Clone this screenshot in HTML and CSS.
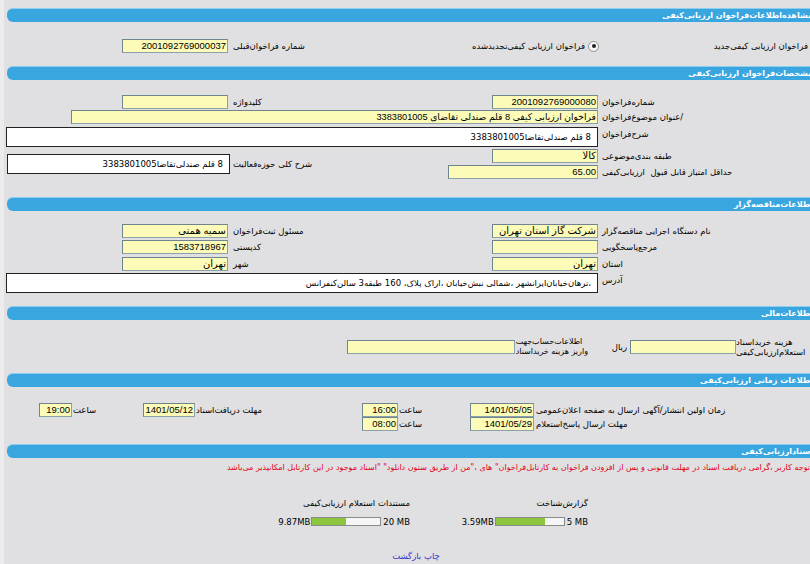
FILE: index.html
```html
<!DOCTYPE html>
<html lang="fa">
<head>
<meta charset="utf-8">
<title>مشاهده اطلاعات فراخوان ارزیابی کیفی</title>
<link rel="stylesheet" href="styles.css">
</head>
<body>
<div class="page">

  <div class="bar"><span>مشاهده‌اطلاعات‌فراخوان ارزیابی‌کیفی</span></div>
  <div class="body s1">
    <div class="form rows1">
      <div class="c1 r"><span class="radio"></span><span class="rlab">فراخوان ارزیابی کیفی‌جدید</span></div>
      <div class="c2 r"><span class="radio on"></span><span class="rlab">فراخوان ارزیابی کیفی‌تجدیدشده</span></div>
      <div class="c3 lab">شماره فراخوان‌قبلی</div>
      <div class="c4"><span class="fld w105">2001092769000037</span></div>
    </div>
  </div>

  <div class="bar"><span>مشخصات‌فراخوان ارزیابی‌کیفی</span></div>
  <div class="body s2">
    <div class="form rows2">
      <div class="c1 lab">شماره‌فراخوان</div>
      <div class="c2"><span class="fld w105">2001092769000080</span></div>
      <div class="c3 lab">کلیدواژه</div>
      <div class="c4"><span class="fld w105"></span></div>

      <div class="c1 lab">/عنوان موضوع‌فراخوان</div>
      <div class="c2 span3"><span class="fld wtitle ar">فراخوان ارزیابی کیفی 8 قلم صندلی تقاضای 3383801005</span></div>

      <div class="c1 lab">شرح‌فراخوان</div>
      <div class="c2 span3"><span class="box wide">8 قلم صندلی‌تقاضا3383801005</span></div>

      <div class="c1 lab">طبقه بندی‌موضوعی</div>
      <div class="c2"><span class="fld w105 ar">کالا</span></div>
      <div class="c3 lab tall">شرح کلی حوزه‌فعالیت</div>
      <div class="c4 tall"><span class="box small">8 قلم صندلی‌تقاضا3383801005</span></div>

      <div class="c1 lab">حداقل امتیاز قابل قبول  ارزیابی‌کیفی</div>
      <div class="c2"><span class="fld w149">65.00</span></div>
    </div>
  </div>

  <div class="bar"><span>اطلاعات‌مناقصه‌گزار</span></div>
  <div class="body s3">
    <div class="form rows3">
      <div class="c1 lab">نام دستگاه اجرایی مناقصه‌گزار</div>
      <div class="c2"><span class="fld w105 ar">شرکت گاز استان تهران</span></div>
      <div class="c3 lab">مسئول ثبت‌فراخوان</div>
      <div class="c4"><span class="fld w105 ar">سمیه همتی</span></div>

      <div class="c1 lab">مرجع‌پاسخگویی</div>
      <div class="c2"><span class="fld w105"></span></div>
      <div class="c3 lab">کدپستی</div>
      <div class="c4"><span class="fld w105">1583718967</span></div>

      <div class="c1 lab">استان</div>
      <div class="c2"><span class="fld w105 ar">تهران</span></div>
      <div class="c3 lab">شهر</div>
      <div class="c4"><span class="fld w105 ar">تهران</span></div>

      <div class="c1 lab">آدرس</div>
      <div class="c2 span3"><span class="box wide">،ترهان‌خیابان‌ایرانشهر ،شمالی نبش‌خیابان ،اراک پلاک، 160 طبقه3 سالن‌کنفرانس</span></div>
    </div>
  </div>

  <div class="bar"><span>اطلاعات‌مالی</span></div>
  <div class="body s4">
    <div class="money">
      <div class="mlab1">هزینه خرید‌اسناد<br>استعلام‌ارزیابی‌کیفی</div>
      <span class="fld w105"></span>
      <span class="rial">ریال</span>
      <div class="mlab2">اطلاعات‌حساب‌جهت<br>واریز هزینه خرید‌اسناد</div>
      <span class="fld w168"></span>
    </div>
  </div>

  <div class="bar"><span>اطلاعات زمانی ارزیابی‌کیفی</span></div>
  <div class="body s5">
    <div class="times">
      <div class="t1 lab">زمان اولین انتشار/آگهی ارسال به صفحه اعلان‌عمومی</div>
      <div class="t2"><span class="fld wdate">1401/05/05</span></div>
      <div class="t3 lab">ساعت</div>
      <div class="t4"><span class="fld wtime">16:00</span></div>
      <div class="t5 lab">مهلت دریافت‌اسناد</div>
      <div class="t6"><span class="fld wdate2">1401/05/12</span></div>
      <div class="t7 lab">ساعت</div>
      <div class="t8"><span class="fld wtime2">19:00</span></div>
      <div class="t9"></div>

      <div class="t1 lab">مهلت ارسال پاسخ‌استعلام</div>
      <div class="t2"><span class="fld wdate">1401/05/29</span></div>
      <div class="t3 lab">ساعت</div>
      <div class="t4"><span class="fld wtime">08:00</span></div>
    </div>
  </div>

  <div class="bar"><span>اسناد‌ارزیابی‌کیفی</span></div>
  <div class="body s6">
    <div class="notice">توجه کاربر ،گرامی دریافت اسناد در مهلت قانونی و پس از افزودن فراخوان به کارتابل‌فراخوان" های ،"من از طریق ستون دانلود" "اسناد موجود در این کارتابل امکانپذیر می‌باشد</div>
    <div class="docs">
      <div class="doc">
        <div class="dtitle">گزارش‌شناخت</div>
        <div class="drow"><bdi class="cap" dir="ltr">5 MB</bdi><span class="meter"><span class="fill" style="width:72%"></span></span><bdi class="used" dir="ltr">3.59MB</bdi></div>
      </div>
      <div class="doc">
        <div class="dtitle">مستندات استعلام ارزیابی‌کیفی</div>
        <div class="drow"><bdi class="cap" dir="ltr">20 MB</bdi><span class="meter"><span class="fill" style="width:49%"></span></span><bdi class="used" dir="ltr">9.87MB</bdi></div>
      </div>
    </div>
    <div class="links"><a href="#">چاپ</a> <a href="#">بازگشت</a></div>
  </div>

</div>
</body>
</html>
```

FILE: styles.css
```css
html, body {
  margin: 0;
  padding: 0;
  overflow: hidden;
}
body {
  background: #ececec;
  font-family: "DejaVu Sans", "Liberation Sans", sans-serif;
  font-size: 8.5px;
  color: #000;
  width: 810px;
  height: 564px;
}
.page {
  margin-left: 4px;
  width: 818px;
  padding: 8px 0 0 3px;
  height: 556px;
  background: #e0e0e2;
  direction: rtl;
}
.bar {
  height: 13px;
  background: #3aa6df;
  border-top: 1px solid #8ccdf0;
  border-radius: 6px 0 0 6px;
  color: #fff;
  font-weight: bold;
  font-size: 8px;
  line-height: 13px;
  padding-right: 12px;
  white-space: nowrap;
  overflow: hidden;
}
.form {
  display: grid;
  grid-template-columns: 225px 280px 89px 224px;
  align-items: start;
}
.rows1 { grid-template-rows: 14px; }
.rows2 { grid-template-rows: 15px 17px 22px 16px 14px; }
.rows3 { grid-template-rows: 16px 17px 16px 20px; }
.s1 { padding: 17px 0 13px; }
.s2 { padding: 15px 0 18px; }
.s3 { padding: 13px 0 13px; }
.s4 { padding: 16px 0 15px; }
.s5 { padding: 16px 0 13px; }
.s6 { padding: 0; }

.c1 { grid-column: 1; }
.c2 { grid-column: 2; }
.c3 { grid-column: 3; }
.c4 { grid-column: 4; }
.span3 { grid-column: 2 / 5; }
.lab {
  text-align: left;
  padding-left: 2px;
  line-height: 14px;
  white-space: pre;
}
.tall { grid-row: 4 / 6; align-self: center; }
.c4.tall { display: flex; }

.r { display: flex; align-items: center; height: 14px; white-space: nowrap; }
.c1.r { padding-right: 3px; }
.c2.r { padding-right: 1px; }
.radio {
  width: 11px;
  height: 11px;
  border: 1px solid #8e8f8f;
  border-radius: 50%;
  background: #f7f7f7;
  box-sizing: border-box;
  margin-left: 3px;
  position: relative;
  flex: none;
}
.radio.on::after {
  content: "";
  position: absolute;
  left: 2.5px;
  top: 2.5px;
  width: 4px;
  height: 4px;
  border-radius: 50%;
  background: #222;
}

.fld {
  display: block;
  box-sizing: border-box;
  height: 14px;
  background: #fdfbb8;
  border: 1px solid #8aa0aa;
  border-top-color: #6e8590;
  border-left-color: #6e8590;
  font-family: "Liberation Sans", "DejaVu Sans", sans-serif;
  font-size: 9.5px;
  line-height: 12px;
  padding: 0 1px 0 2px;
  text-align: right;
  white-space: nowrap;
  overflow: hidden;
  flex: none;
}
.fld.ar { font-size: 10px; }
.fld.wtitle { font-size: 9.2px; }
.c2 .fld, .c2 .box { margin-right: 2px; }
.c4 .fld { margin-right: 3px; }
.w105 { width: 106px; }
.w149 { width: 150px; }
.wtitle { width: 527px; }
.w168 { width: 168px; }

.box {
  display: block;
  box-sizing: border-box;
  background: #fff;
  border: 1px solid #222;
  height: 20px;
  line-height: 18px;
  padding: 0 6px;
  text-align: right;
  white-space: nowrap;
  overflow: hidden;
}
.box.wide { width: 592px; }
.box.small { width: 224px; margin-right: 1px; }

.money {
  display: flex;
  align-items: center;
  height: 22px;
}
.mlab1, .mlab2 {
  text-align: left;
  line-height: 10px;
  white-space: nowrap;
  flex: none;
}
.mlab1 { width: 89px; }
.rial { margin-right: 3px; width: 16px; flex: none; }
.mlab2 { margin-right: 23px; margin-left: 1px; font-size: 8px; }

.times {
  display: grid;
  grid-template-columns: 290px 66px 71px 37px 166px 53px 70px 34px 31px;
  grid-template-rows: 14px 14px;
}
.times .lab { line-height: 14px; padding-left: 1px; }
.wdate { width: 64px; margin-right: 1px; }
.wtime { width: 36px; margin-right: 0; }
.wdate2 { width: 52px; margin-right: 0; }
.wtime2 { width: 33px; margin-right: 0; }

.notice {
  color: #e00018;
  font-size: 8px;
  line-height: 11px;
  padding: 4px 15px 0 0;
  white-space: nowrap;
}
.docs {
  display: flex;
  justify-content: center;
  margin-top: 25px;
}
.doc {
  width: 172px;
  padding-right: 6px;
}
.dtitle { line-height: 11px; }
.drow {
  display: flex;
  align-items: center;
  margin-top: 7px;
  height: 11px;
}
.cap { margin-left: 2px; }
.meter {
  display: block;
  width: 70px;
  height: 9px;
  box-sizing: border-box;
  border: 1px solid #8a8a8a;
  background: #f6f6f6;
  direction: ltr;
  margin-left: 1px;
  flex: none;
}
.fill {
  display: block;
  height: 100%;
  background: #8cc63e;
}
.links {
  text-align: center;
  margin-top: 24px;
  line-height: 11px;
}
.links a {
  color: #3535cc;
  text-decoration: none;
}
```
